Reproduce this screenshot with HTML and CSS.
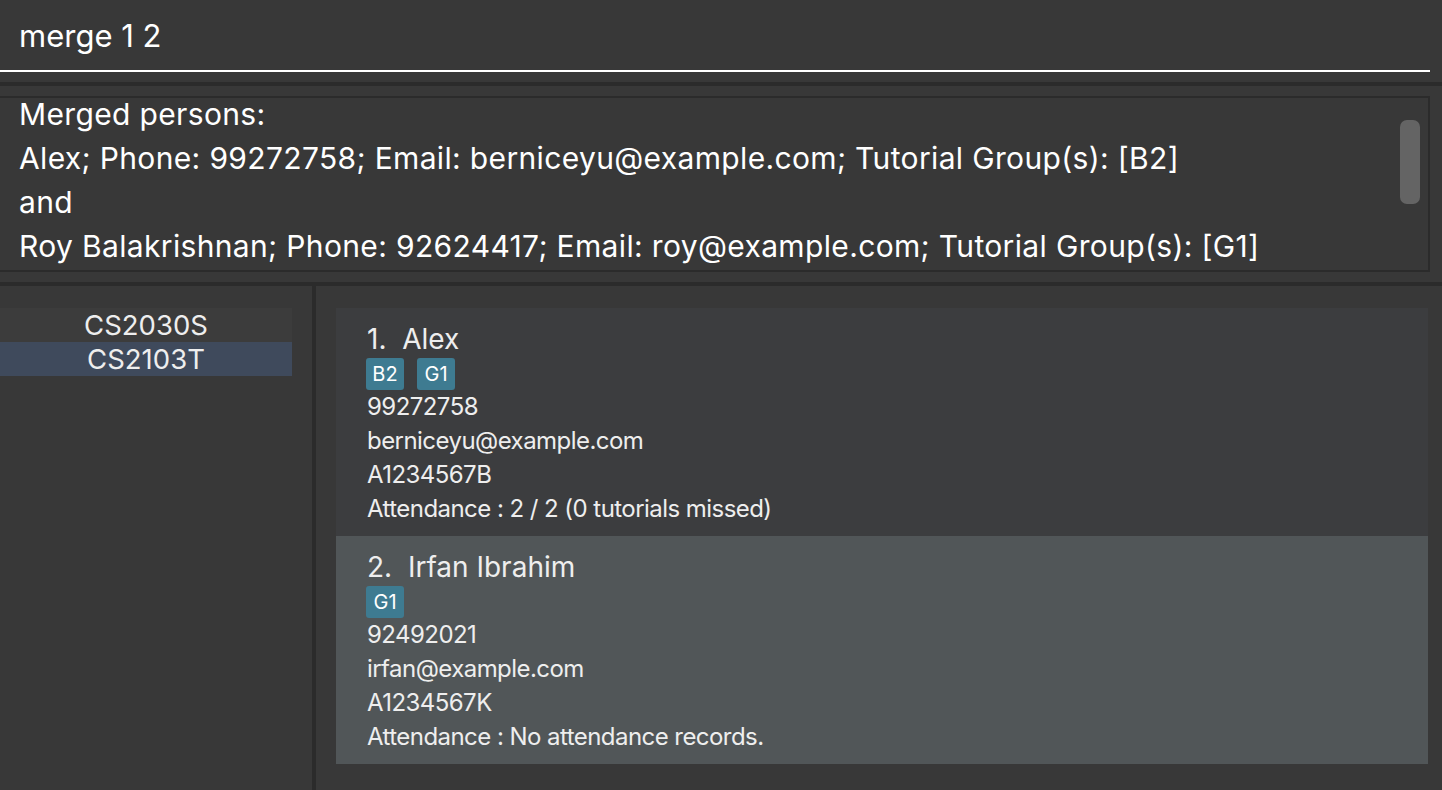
FILE: index.html
```html
<!DOCTYPE html>
<html>
<head>
<meta charset="utf-8">
<link rel="stylesheet" href="styles.css">
</head>
<body>
<div class="app">
  <div class="command">merge 1 2</div>
  <div class="divider-h top"></div>
  <div class="result-wrap">
    <div class="result">
      <div class="result-text">
        <div>Merged persons:</div>
        <div>Alex; Phone: 99272758; Email: berniceyu@example.com; Tutorial Group(s): [B2]</div>
        <div>and</div>
        <div>Roy Balakrishnan; Phone: 92624417; Email: roy@example.com; Tutorial Group(s): [G1]</div>
      </div>
      <div class="thumb"></div>
    </div>
  </div>
  <div class="divider-h"></div>
  <div class="main">
    <div class="groups">
      <div class="group">CS2030S</div>
      <div class="group selected">CS2103T</div>
    </div>
    <div class="divider-v"></div>
    <div class="persons">
      <div class="card">
        <div class="name">1.&nbsp; Alex</div>
        <div class="tags"><span class="tag">B2</span><span class="tag">G1</span></div>
        <div class="line">99272758</div>
        <div class="line">berniceyu@example.com</div>
        <div class="line">A1234567B</div>
        <div class="line">Attendance : 2 / 2 (0 tutorials missed)</div>
      </div>
      <div class="card selected">
        <div class="name">2.&nbsp; Irfan Ibrahim</div>
        <div class="tags"><span class="tag">G1</span></div>
        <div class="line">92492021</div>
        <div class="line">irfan@example.com</div>
        <div class="line">A1234567K</div>
        <div class="line">Attendance : No attendance records.</div>
      </div>
    </div>
  </div>
</div>
</body>
</html>
```
FILE: styles.css
```css
html, body {
  margin: 0;
  padding: 0;
  background: #383838;
  width: 1442px;
  height: 790px;
  overflow: hidden;
  font-family: Inter, "Open Sans", sans-serif;
  color: #ffffff;
}

.app {
  display: flex;
  flex-direction: column;
  height: 790px;
}

.command {
  height: 70px;
  margin-right: 12px;
  border-bottom: 2px solid #ffffff;
  padding-left: 19px;
  font-size: 31px;
  line-height: 72px;
  letter-spacing: 0;
  box-sizing: content-box;
  flex: none;
}

.divider-h {
  height: 4px;
  background: #2b2b2b;
  flex: none;
}

.divider-h.top {
  margin-top: 10px;
}

.result-wrap {
  padding: 10px 12px 10px 0;
  flex: none;
}

.result {
  position: relative;
  height: 172px;
  border: 2px solid #2b2b2b;
  border-left: none;
  overflow: hidden;
}

.result-text {
  margin-top: -6px;
  padding-left: 19px;
  font-size: 30px;
  line-height: 44px;
  letter-spacing: 0.35px;
  white-space: nowrap;
}

.thumb {
  position: absolute;
  right: 8px;
  top: 22px;
  width: 20px;
  height: 84px;
  border-radius: 7px;
  background: #646464;
}

.main {
  flex: 1;
  display: flex;
  min-height: 0;
}

.groups {
  width: 292px;
  padding: 22px 20px 0 0;
  flex: none;
}

.group {
  height: 34px;
  line-height: 34px;
  text-align: center;
  font-size: 27.5px;
  color: #eeeeee;
  background: #3c3c3c;
}

.group.selected {
  background: #3f4a5c;
}

.divider-v {
  width: 4px;
  background: #2b2b2b;
  flex: none;
}

.persons {
  flex: 1;
  padding: 22px 14px 0 20px;
}

.card {
  background: #3c3d3f;
  padding: 14px 0 10px 31px;
  color: #eeeeee;
}

.card.selected {
  background: #515658;
}

.name {
  font-size: 28px;
  line-height: 34px;
  color: #eeeeee;
}

.tags {
  display: flex;
  gap: 14px;
  margin-top: 2px;
  height: 32px;
}

.tag {
  background: #3e7b91;
  border-radius: 3px;
  width: 38px;
  height: 32px;
  line-height: 32px;
  text-align: center;
  font-size: 20px;
  color: #ffffff;
  box-sizing: border-box;
  margin-left: -1px;
}

.line {
  font-size: 24px;
  line-height: 34px;
  letter-spacing: -0.55px;
}
```
